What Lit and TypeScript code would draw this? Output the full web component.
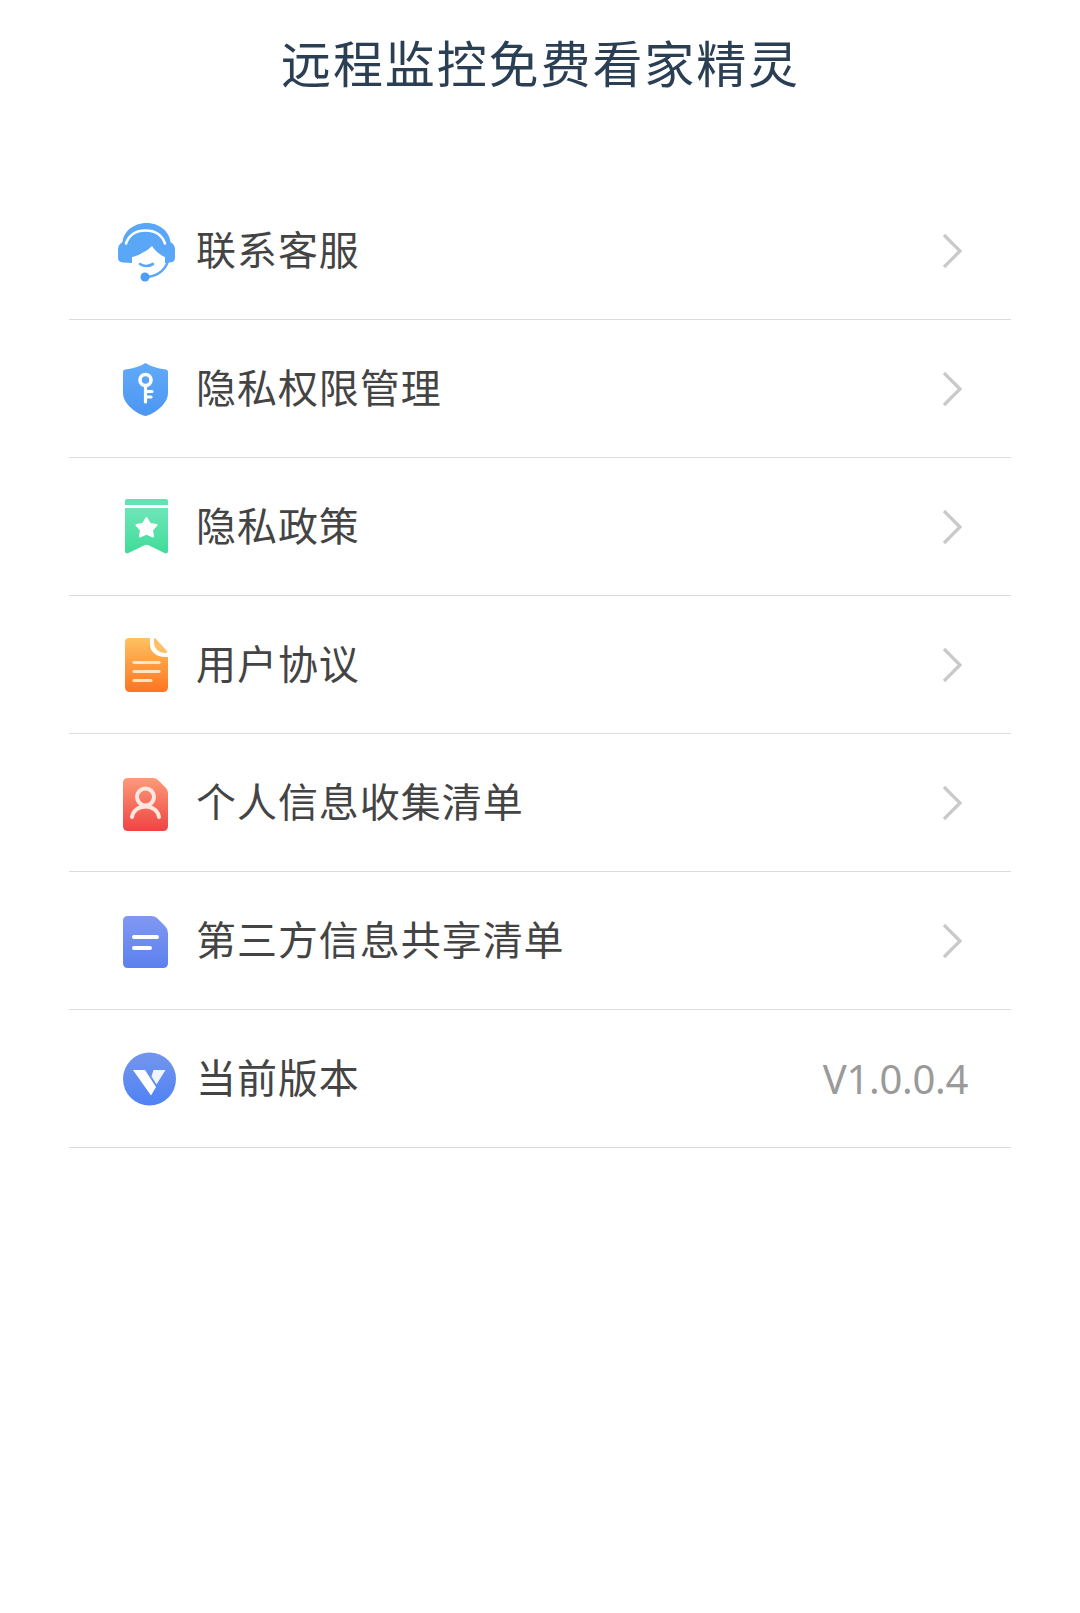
import { LitElement, html, css, svg } from "lit";
import { customElement } from "lit/decorators.js";

const defs = svg`<defs>
  <linearGradient id="gBlue" x1="0" y1="0" x2="0" y2="1"><stop offset="0" stop-color="#62aaf8"/><stop offset="1" stop-color="#4b96f3"/></linearGradient>
  <linearGradient id="gGreen" x1="0" y1="0" x2="0" y2="1"><stop offset="0" stop-color="#6fe6b8"/><stop offset="1" stop-color="#3fdc98"/></linearGradient>
  <linearGradient id="gOrange" x1="0" y1="0" x2="0" y2="1"><stop offset="0" stop-color="#fdc262"/><stop offset="1" stop-color="#fd7420"/></linearGradient>
  <linearGradient id="gRed" x1="0" y1="0" x2="0" y2="1"><stop offset="0" stop-color="#fd9a78"/><stop offset="1" stop-color="#ee4444"/></linearGradient>
  <linearGradient id="gIndigo" x1="0" y1="0" x2="0" y2="1"><stop offset="0" stop-color="#8198f2"/><stop offset="1" stop-color="#5b80ee"/></linearGradient>
  <linearGradient id="gV" x1="0" y1="0" x2="0" y2="1"><stop offset="0" stop-color="#7396ec"/><stop offset="1" stop-color="#4f82f5"/></linearGradient>
</defs>`;

const icons = [
  svg`
    <path d="M31.500 5 C18 5 8.500 14 7.500 24 L5 26 Q3 28 3 31 V40 Q3 44 8 44.500 L17 45 V39 C21 38 24 37 27 35 C31 33 34 31 37 28 C40 33 45 37 50 39 V45 L55 44.500 Q60 44 60 40 V31 Q60 28 58 26 L55.500 24 C54.500 14 45 5 31.500 5Z" fill="#5aa7f7"/>
    <path d="M11 25.500 C14 17 21 12.500 30.500 12.500 C40 12.500 47 17 50 25.500" fill="none" stroke="#fff" stroke-width="2.600" stroke-linecap="round"/>
    <path d="M25 46 Q31 50 38 46" fill="none" stroke="#5aa7f7" stroke-width="2.600" stroke-linecap="round"/>
    <path d="M30 59 C41 59 50 53 53 43" fill="none" stroke="#5aa7f7" stroke-width="2.600" stroke-linecap="round"/>
    <circle cx="30" cy="59" r="4.500" fill="#4b9df5"/>`,
  svg`
    <path d="M30.500 7 L35 9.500 Q44 13 51 13.500 Q53 13.700 53 16 V37 C53 47 42 56 32.500 59.500 Q30.500 60.300 28.500 59.500 C19 56 8 47 8 37 V16 Q8 13.700 10 13.500 Q17 13 26 9.500Z" fill="url(#gBlue)"/>
    <circle cx="30.500" cy="24" r="5.500" fill="none" stroke="#fff" stroke-width="3.600"/>
    <path d="M30.500 29.500 V46 M30.500 35.500 H37 M30.500 41 H36" fill="none" stroke="#fff" stroke-width="3.200" stroke-linecap="round"/>`,
  svg`
    <path d="M12 5 H51 Q53 5 53 7 V11 H10 V7 Q10 5 12 5Z" fill="#63e3b3"/>
    <path d="M10 14 H53 V57 Q53 60.500 49.500 59 L33 51 Q31.500 50.300 30 51 L13.500 59 Q10 60.500 10 57Z" fill="url(#gGreen)"/>
    <path d="M31.500 24 L35 30 L41.500 31 L37 36 L38 42.500 L31.500 39.500 L25 42.500 L26 36 L21.500 31 L28 30Z" fill="#fff" stroke="#fff" stroke-width="2" stroke-linejoin="round"/>`,
  svg`
    <path d="M14 6 H35 V12 C35 20 42 26 53 25 V55 Q53 60 48 60 H15 Q10 60 10 55 V10 Q10 6 14 6Z" fill="url(#gOrange)"/>
    <path d="M39 6 Q40 6 41 7 L52 19 Q53 21 50 21 C44 21 39 17 39 10Z" fill="#fdc066"/>
    <path d="M19 30.500 H44 M19 39.500 H44 M19 48.500 H36" fill="none" stroke="#ffe4c4" stroke-width="3.200" stroke-linecap="round"/>`,
  svg`
    <path d="M13 8 H38 Q41 8 43 10 L50 17 Q53 20 53 23 V56 Q53 61 48 61 H13 Q8 61 8 56 V13 Q8 8 13 8Z" fill="url(#gRed)"/>
    <circle cx="30.500" cy="27" r="8.500" fill="none" stroke="#ffe6df" stroke-width="4"/>
    <path d="M17 47 C18 41 23 36.500 30.500 36.500 C38 36.500 43 41 44 47" fill="none" stroke="#ffe6df" stroke-width="4" stroke-linecap="round"/>`,
  svg`
    <path d="M13 8 H36 Q40 8 42 10 L50 18 Q53 21 53 25 V55 Q53 60 48 60 H13 Q8 60 8 55 V13 Q8 8 13 8Z" fill="url(#gIndigo)"/>
    <path d="M19 29 H42 M19 40 H35" fill="none" stroke="#fff" stroke-width="4" stroke-linecap="round"/>`,
  svg`
    <circle cx="34.500" cy="33" r="26.500" fill="url(#gV)"/>
    <path d="M18 24 H30 L41 41 L36 49.500Z" fill="#fff"/>
    <path d="M38.500 24 H50.500 L41.500 38.500 L36.500 30.500Z" fill="#fff" opacity=".9"/>`,
];

const rows: { label: string; value?: string }[] = [
  { label: "联系客服" },
  { label: "隐私权限管理" },
  { label: "隐私政策" },
  { label: "用户协议" },
  { label: "个人信息收集清单" },
  { label: "第三方信息共享清单" },
  { label: "当前版本", value: "V1.0.0.4" },
];

@customElement("app-root")
export class AppRoot extends LitElement {
  static styles = css`
    :host {
      display: block;
      width: 1080px;
      height: 1613px;
      background: #fff;
      font-family: "Noto Sans CJK SC", "Noto Sans", sans-serif;
      overflow: hidden;
    }
    .title {
      height: 132px;
      padding: 31px 0 0 1px;
      box-sizing: border-box;
      text-align: center;
      font-size: 50px;
      line-height: 60px;
      letter-spacing: 1.9px;
      font-weight: 400;
      color: #2b3f54;
    }
    .list {
      margin: 50px 69px 0;
    }
    .row {
      height: 138px;
      box-sizing: border-box;
      border-bottom: 1px solid #dcdcdc;
      display: flex;
      align-items: center;
      padding: 0 43px 0 46px;
    }
    .icon {
      width: 64px;
      height: 64px;
      flex: none;
      margin: 0 17px 2px 0;
    }
    .label {
      flex: 1;
      font-size: 40px;
      line-height: 48px;
      letter-spacing: 0.95px;
      color: #444;
      font-weight: 400;
      padding-bottom: 5px;
    }
    .chev {
      width: 24px;
      height: 36px;
      margin-right: 4px;
      flex: none;
    }
    .value {
      font-family: "Noto Sans", sans-serif;
      font-size: 40px;
      line-height: 48px;
      font-weight: 400;
      letter-spacing: -0.3px;
      color: #9a9a9a;
    }
  `;

  render() {
    return html`
      <svg width="0" height="0" style="position:absolute">${defs}</svg>
      <div class="title">远程监控免费看家精灵</div>
      <div class="list">
        ${rows.map(
          (r, i) => html`
            <div class="row">
              <svg class="icon" viewBox="0 0 64 64">${icons[i]}</svg>
              <div class="label">${r.label}</div>
              ${r.value
                ? html`<div class="value">${r.value}</div>`
                : html`<svg class="chev" viewBox="0 0 24 36"><path d="M4 2 L20 18 L4 34" fill="none" stroke="#c9c9c9" stroke-width="3.200"/></svg>`}
            </div>
          `
        )}
      </div>
    `;
  }
}
